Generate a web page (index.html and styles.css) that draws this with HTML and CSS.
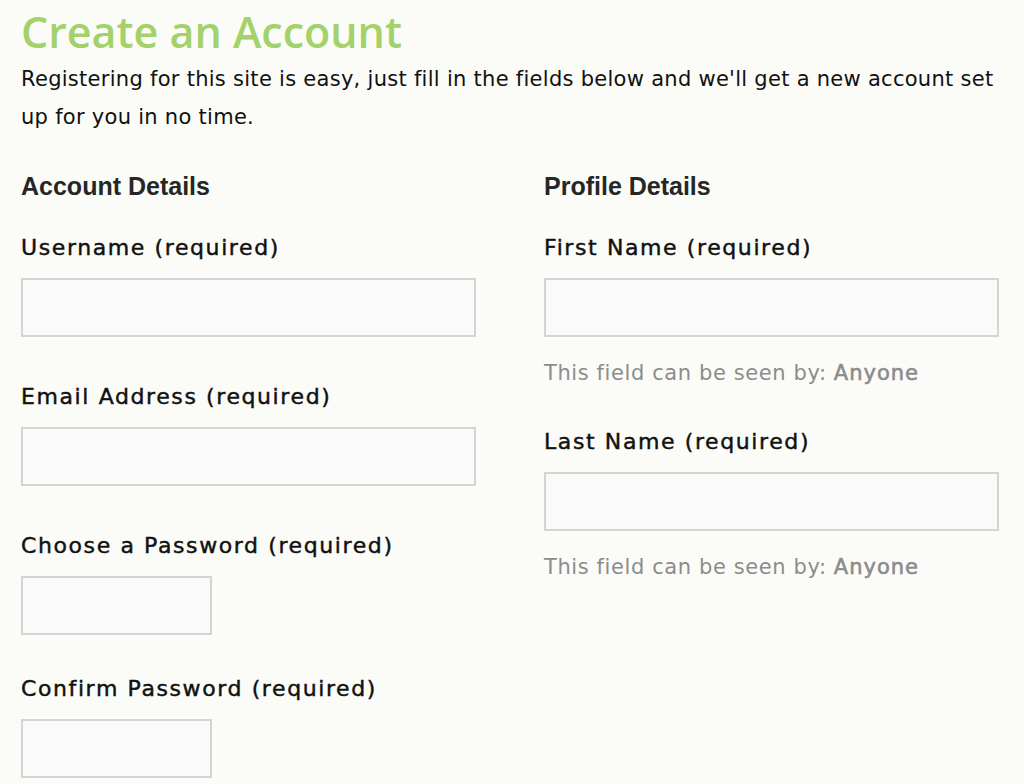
FILE: index.html
```html
<!DOCTYPE html>
<html lang="en">
<head>
  <meta charset="UTF-8"/>
  <title>Create an Account</title>
  <link rel="stylesheet" href="styles.css">
</head>
<body>
  <h1>Create an Account</h1>
  <p class="intro">Registering for this site is easy, just fill in the fields below and we'll get a new account set up for you in no time.</p>

  <form class="register">
    <div class="col">
      <h4>Account Details</h4>

      <label for="user">Username (required)</label>
      <input id="user" type="text"/>

      <label for="mail">Email Address (required)</label>
      <input id="mail" type="text"/>

      <label for="pass">Choose a Password (required)</label>
      <input id="pass" type="password" class="short"/>

      <label for="pass2">Confirm Password (required)</label>
      <input id="pass2" type="password" class="short"/>
    </div>

    <div class="col">
      <h4>Profile Details</h4>

      <label for="first">First Name (required)</label>
      <input id="first" type="text"/>
      <p class="vis">This field can be seen by: <b>Anyone</b></p>

      <label for="last">Last Name (required)</label>
      <input id="last" type="text"/>
      <p class="vis">This field can be seen by: <b>Anyone</b></p>
    </div>
  </form>
</body>
</html>
```

FILE: styles.css
```css
body { margin:0; padding:0 25px 0 21px; background:#fbfcf8; color:#111; font-family:"DejaVu Sans", sans-serif; }
h1 { margin:4px 0 0; font-family:"Open Sans", sans-serif; font-size:43px; font-weight:600; line-height:56px; color:#a3d16a; }
.intro { margin:0; font-size:21px; letter-spacing:0.28px; line-height:38px; }
.register { display:grid; grid-template-columns:1fr 1fr; column-gap:68px; margin-top:36px; }
.col { display:flex; flex-direction:column; align-items:flex-start; }
h4 { margin:0 0 34px; font-family:"Liberation Sans", sans-serif; font-size:25px; font-weight:bold; line-height:28px; color:#262626; }
label { font-size:22px; letter-spacing:1.6px; -webkit-text-stroke:0.45px #111; line-height:28px; margin-bottom:16px; }
input { box-sizing:border-box; width:100%; height:59px; margin:0 0 46px; background:#fafafa; border:2px solid #d4d4d4; }
input.short { width:191px; margin-bottom:40px; }
.vis { margin:-24px 0 41px; font-size:21px; letter-spacing:0.6px; color:#8c8c8c; line-height:28px; }
.vis b { -webkit-text-stroke:0.6px #8c8c8c; font-weight:normal; letter-spacing:1px; }
```
